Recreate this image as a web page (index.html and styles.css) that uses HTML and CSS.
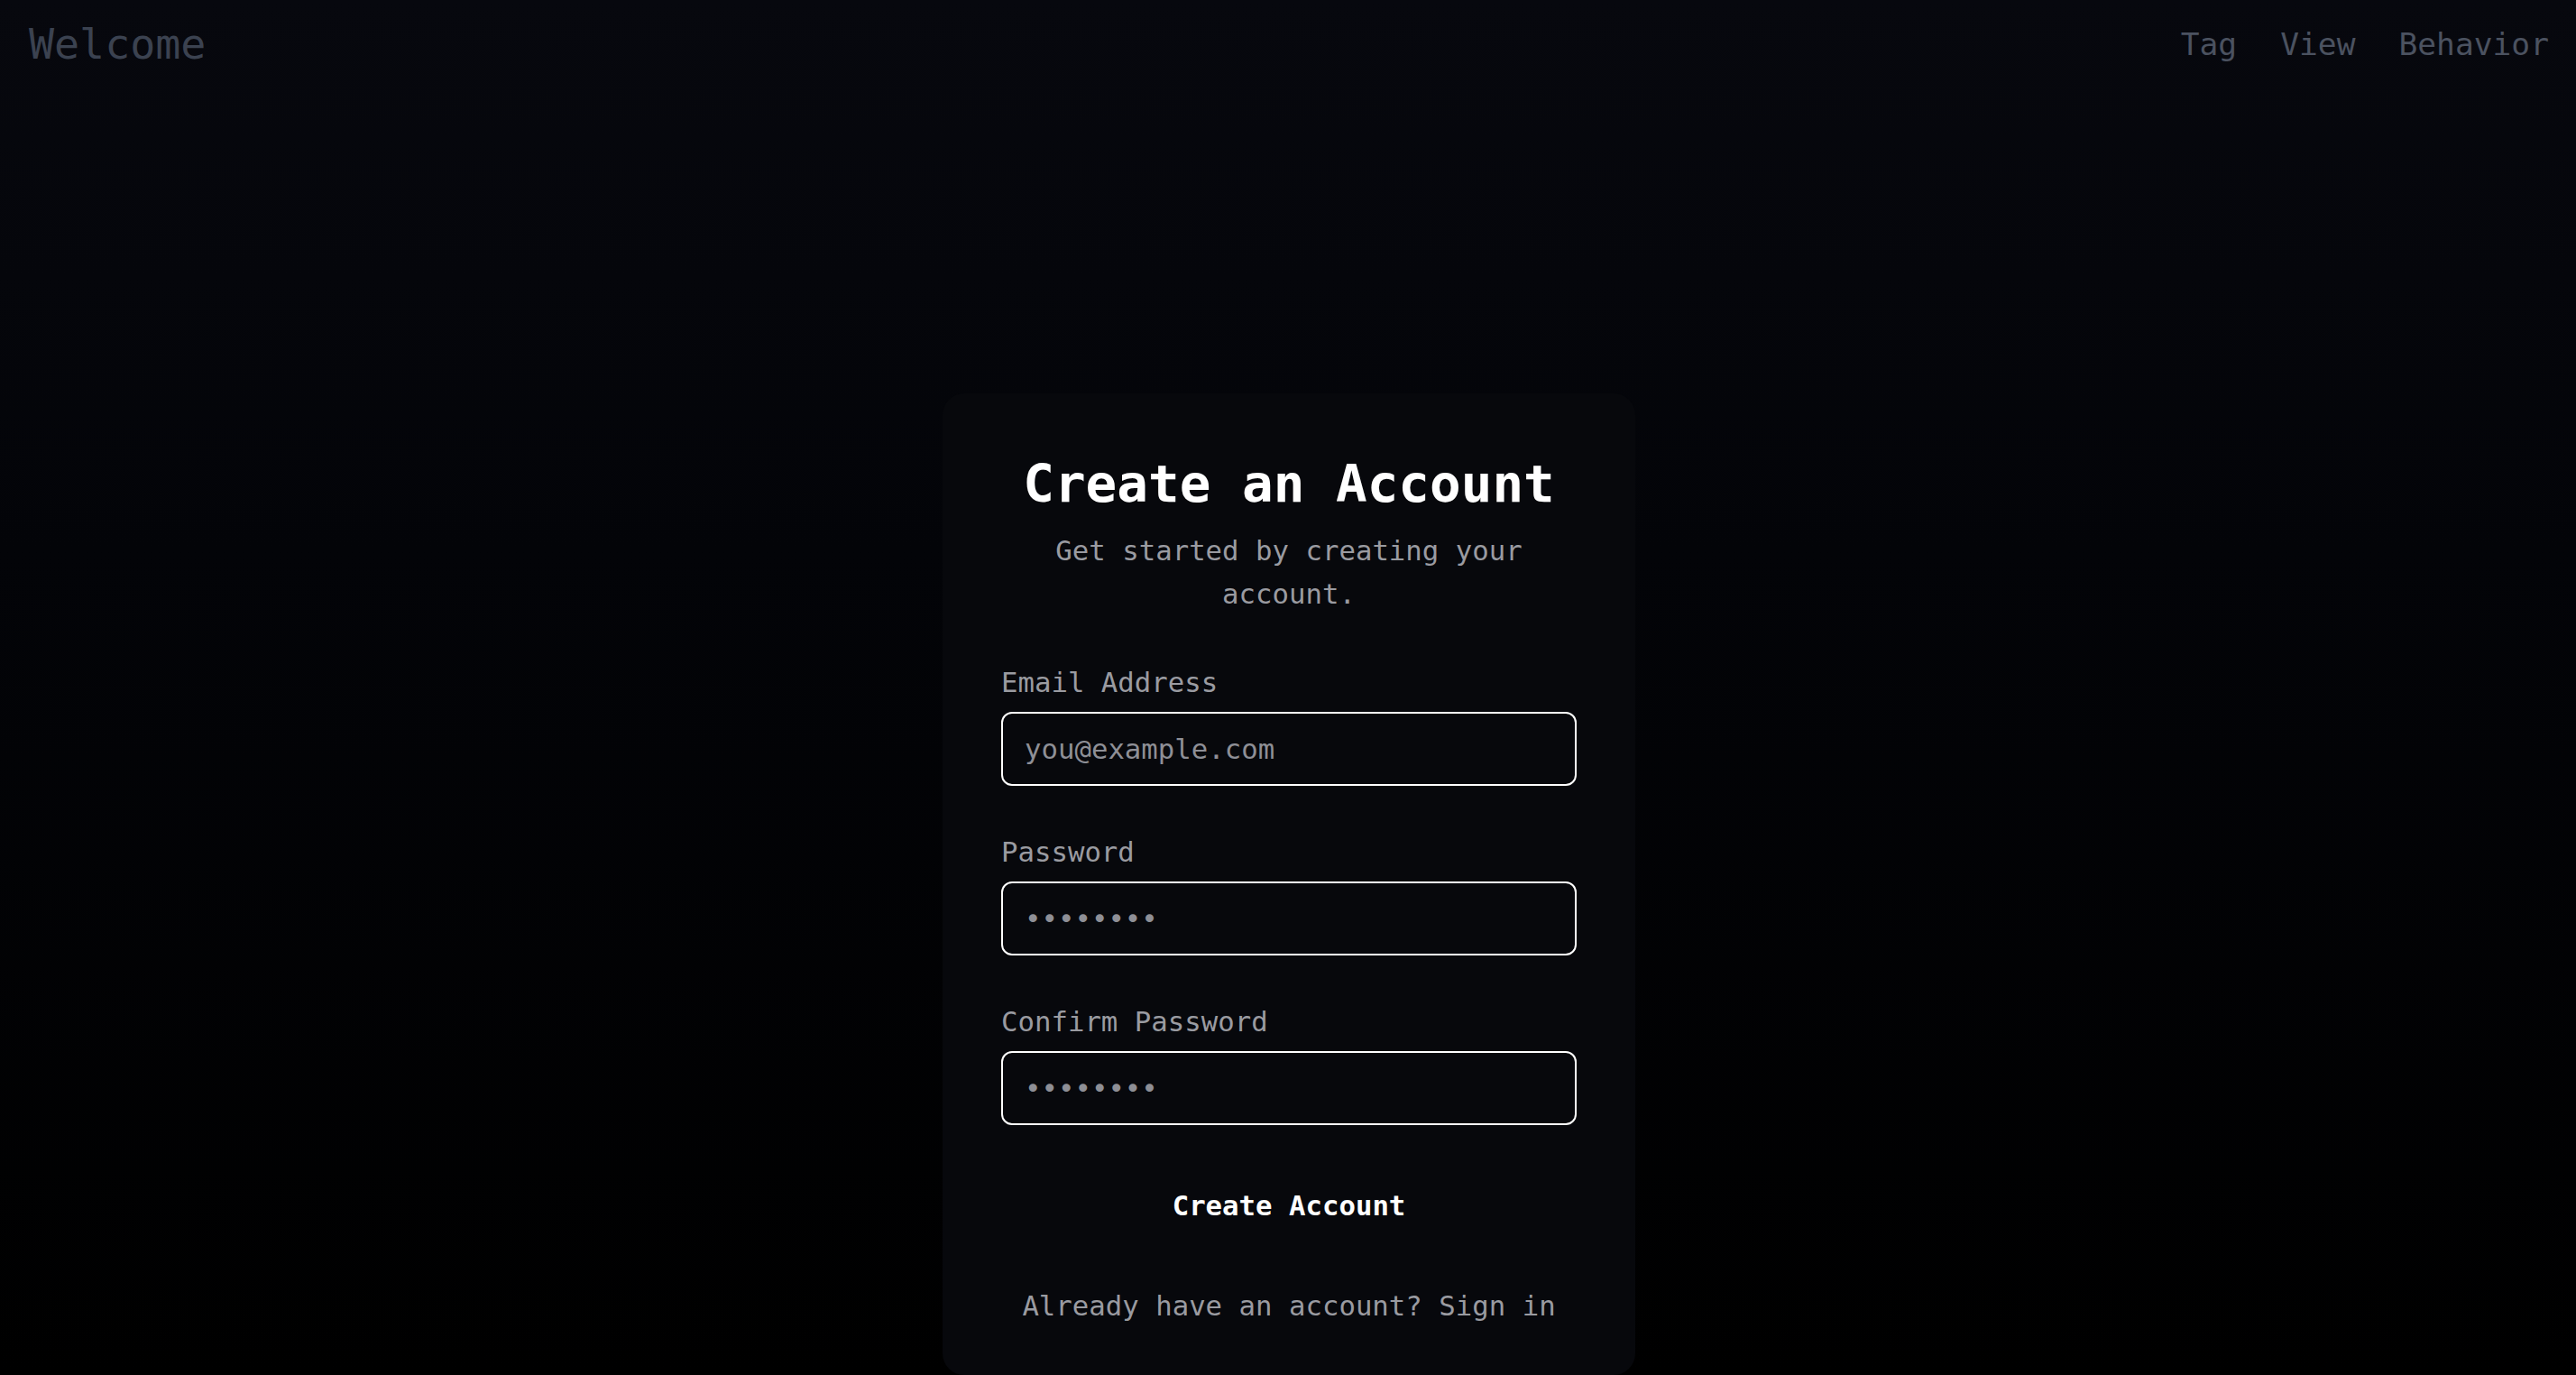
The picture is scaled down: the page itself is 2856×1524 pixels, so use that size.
FILE: index.html
```html
<!DOCTYPE html>
<html lang="en">
<head>
<meta charset="utf-8">
<title>Create an Account</title>
<link rel="stylesheet" href="styles.css">
</head>
<body>
<header class="topbar">
  <div class="brand">Welcome</div>
  <nav class="nav">
    <a class="nav-link" href="#">Tag</a>
    <a class="nav-link" href="#">View</a>
    <a class="nav-link" href="#">Behavior</a>
  </nav>
</header>
<main class="main">
  <section class="card">
    <h1 class="title">Create an Account</h1>
    <p class="subtitle">Get started by creating your account.</p>
    <form class="form">
      <div class="field">
        <label class="label" for="email">Email Address</label>
        <input class="input" id="email" type="email" placeholder="you@example.com">
      </div>
      <div class="field">
        <label class="label" for="pw">Password</label>
        <input class="input" id="pw" type="password" placeholder="••••••••">
      </div>
      <div class="field">
        <label class="label" for="pw2">Confirm Password</label>
        <input class="input" id="pw2" type="password" placeholder="••••••••">
      </div>
      <button class="submit" type="button">Create Account</button>
    </form>
    <p class="footer-text">Already have an account? <a class="signin" href="#">Sign in</a></p>
  </section>
</main>
</body>
</html>
```
FILE: styles.css
```css
html, body {
  margin: 0;
  padding: 0;
  height: 100%;
  overflow: hidden;
}
body {
  background: linear-gradient(to bottom, #07080e 0%, #030408 40%, #000000 100%);
  font-family: "DejaVu Sans Mono", "Liberation Mono", monospace;
  color: #ffffff;
}
.topbar {
  height: 98px;
  padding: 0 30px 0 32px;
  display: flex;
  align-items: center;
  justify-content: space-between;
  box-sizing: border-box;
}
.brand {
  font-size: 46.6px;
  color: #3b4250;
}
.nav {
  display: flex;
  gap: 48px;
}
.nav-link {
  font-size: 34.6px;
  color: #4b5260;
  text-decoration: none;
}
.main {
  display: flex;
  justify-content: center;
  padding-top: 338px;
  padding-left: 2px;
}
.card {
  width: 768px;
  box-sizing: border-box;
  padding: 64px 65px 53px;
  background: #07080c;
  border-radius: 24px;
  text-align: center;
}
.title {
  margin: 0;
  font-size: 57.6px;
  line-height: 74px;
  font-weight: bold;
  color: #ffffff;
}
.subtitle {
  margin: 13px 0 0;
  font-size: 30.7px;
  line-height: 48px;
  color: #9a9ba1;
}
.form {
  margin-top: 51px;
  text-align: left;
}
.field + .field {
  margin-top: 51px;
}
.label {
  display: block;
  font-size: 30.7px;
  line-height: 46px;
  color: #9a9ba1;
}
.input {
  display: block;
  width: 100%;
  height: 82px;
  margin-top: 9px;
  box-sizing: border-box;
  padding: 0 24px;
  border: 2px solid #ffffff;
  border-radius: 12px;
  background: transparent;
  font-family: "DejaVu Sans Mono", "Liberation Mono", monospace;
  font-size: 30.7px;
  color: #ffffff;
  outline: none;
}
.input::placeholder {
  color: #8e8f96;
  opacity: 1;
}
.submit {
  display: block;
  width: 100%;
  margin-top: 51px;
  padding: 16px 0;
  border: none;
  background: transparent;
  font-family: "DejaVu Sans Mono", "Liberation Mono", monospace;
  font-size: 30.7px;
  line-height: 46px;
  font-weight: bold;
  color: #ffffff;
  cursor: pointer;
}
.footer-text {
  margin: 49px 0 0;
  font-size: 30.7px;
  line-height: 46px;
  color: #9a9ba1;
}
.signin {
  color: #9a9ba1;
  text-decoration: none;
}
```
